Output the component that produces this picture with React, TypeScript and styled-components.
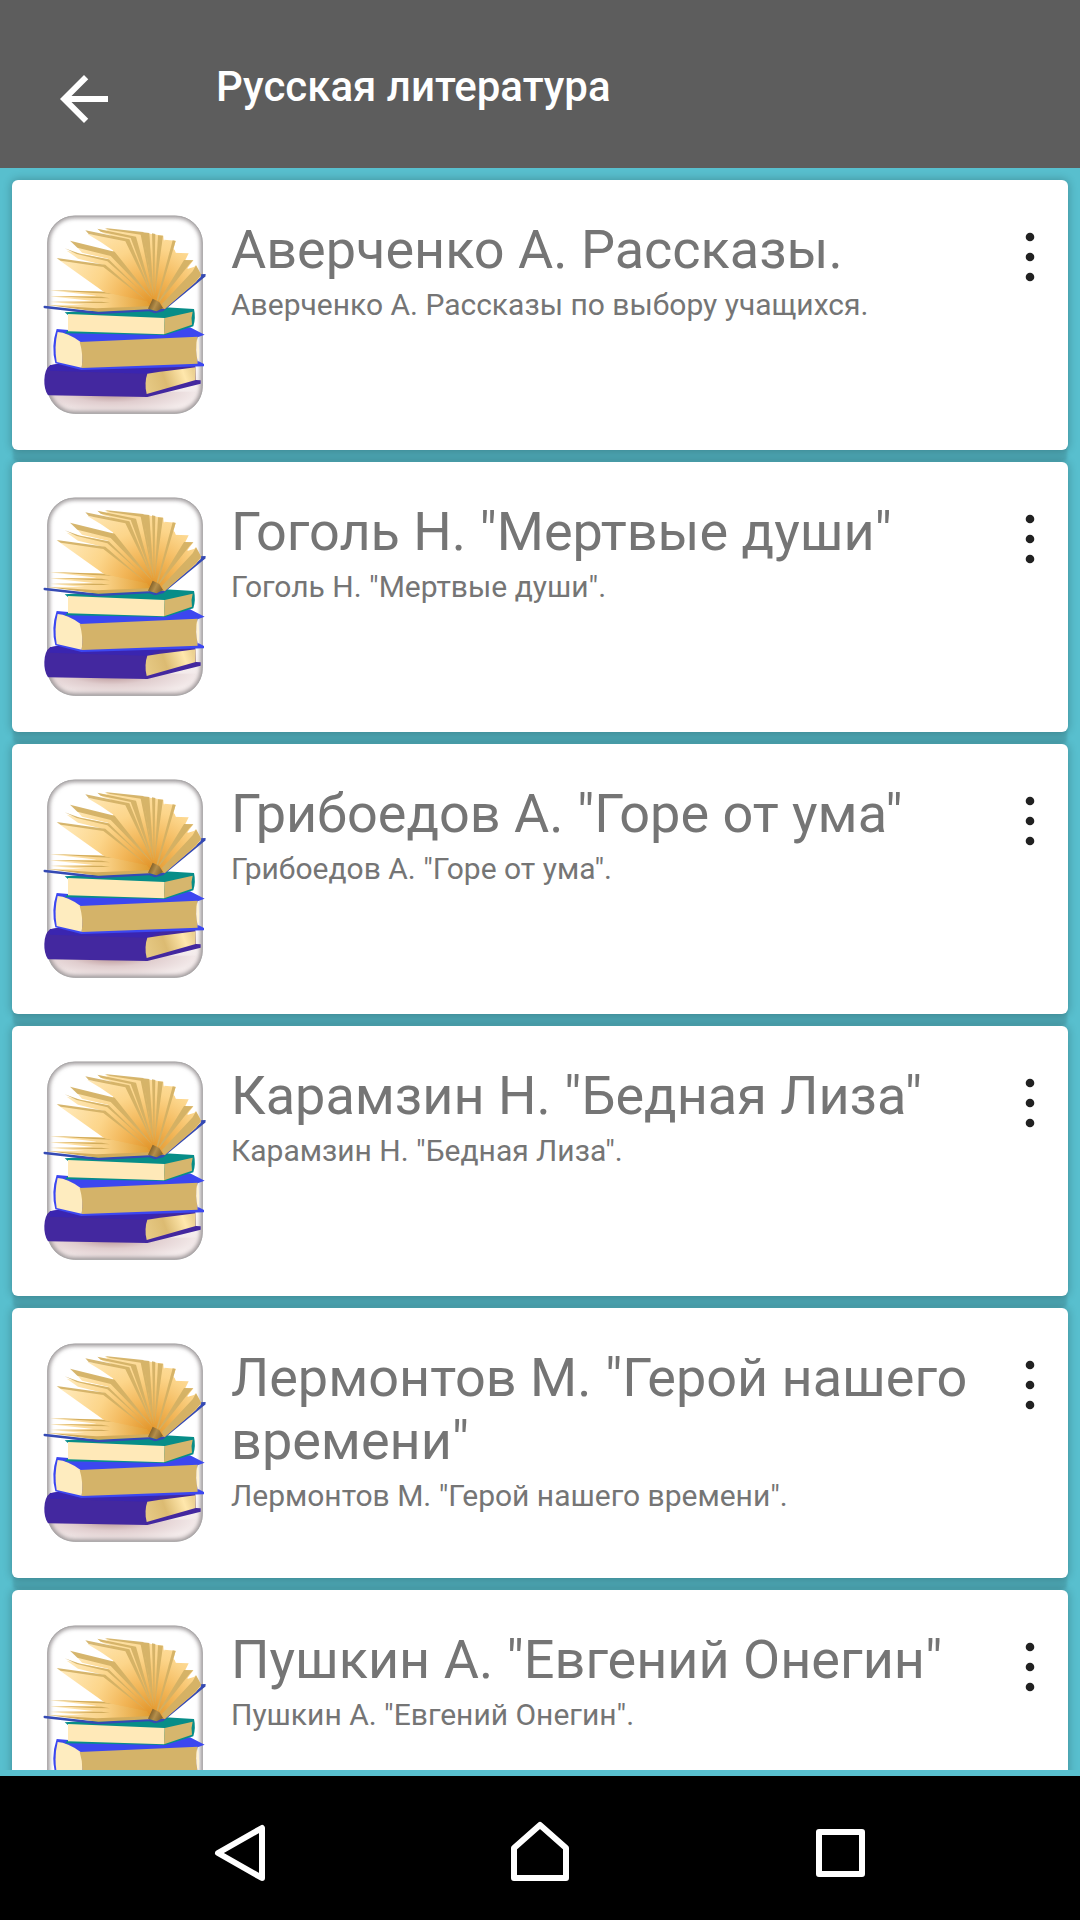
import React from "react";
import styled, { createGlobalStyle } from "styled-components";

const GlobalStyle = createGlobalStyle`
  *, *::before, *::after { box-sizing: border-box; }
  body {
    margin: 0;
    background: #000;
    font-family: Roboto, "Noto Sans", sans-serif;
  }
`;

const Screen = styled.div`
  display: flex;
  flex-direction: column;
  height: 100vh;
`;

const IconButton = styled.button`
  display: flex;
  align-items: center;
  justify-content: center;
  flex: none;
  padding: 0;
  border: 0;
  background: none;
  color: inherit;
  cursor: pointer;
`;

const AppBar = styled.header`
  display: flex;
  flex: none;
  align-items: flex-start;
  gap: 96px;
  padding: 63px 48px 33px;
  background: #5d5d5d;
  color: #fff;
`;

const AppTitle = styled.h1`
  margin: 0;
  font-size: 42px;
  line-height: 47px;
  font-weight: 500;
`;

const ListArea = styled.main`
  flex: 1;
  min-height: 0;
  padding-bottom: 6px;
  background: #58bfce;
`;

const BookList = styled.ul`
  display: flex;
  flex-direction: column;
  gap: 12px;
  height: 100%;
  margin: 0;
  padding: 12px;
  overflow-y: auto;
  scrollbar-width: none;
  list-style: none;
`;

const Card = styled.li`
  display: flex;
  flex: none;
  align-items: flex-start;
  padding: 30px 8px 30px 28px;
  border-radius: 6px;
  background: #fff;
  box-shadow:
    0 13px 3px -1px rgba(0, 0, 0, 0.12),
    0 0 8px 1px rgba(0, 0, 0, 0.22);
`;

const Picture = styled.svg`
  flex: none;
  width: 170px;
  height: 210px;
`;

const CardText = styled.div`
  flex: 1;
  min-width: 0;
  padding: 8px 0 0 21px;
  color: #757575;
`;

const BookTitle = styled.h2`
  margin: 0;
  font-size: 54px;
  line-height: 63px;
  font-weight: 400;
`;

const BookNote = styled.p`
  margin: 6px 0 0;
  font-size: 30px;
  line-height: 36px;
`;

const MenuButton = styled(IconButton)`
  width: 60px;
  height: 93px;
  color: #212121;
`;

const NavBar = styled.nav`
  display: flex;
  flex: none;
  padding: 36px 90px;
  background: #000;
  color: #fff;
`;

const NavButton = styled(IconButton)`
  flex: 1;
`;

const SharedDefs = styled.svg`
  position: absolute;
  width: 0;
  height: 0;
`;

const books = [
  { title: "Аверченко А. Рассказы.", note: "Аверченко А. Рассказы по выбору учащихся." },
  { title: 'Гоголь Н. "Мертвые души"', note: 'Гоголь Н. "Мертвые души".' },
  { title: 'Грибоедов А. "Горе от ума"', note: 'Грибоедов А. "Горе от ума".' },
  { title: 'Карамзин Н. "Бедная Лиза"', note: 'Карамзин Н. "Бедная Лиза".' },
  { title: 'Лермонтов М. "Герой нашего времени"', note: 'Лермонтов М. "Герой нашего времени".' },
  { title: 'Пушкин А. "Евгений Онегин"', note: 'Пушкин А. "Евгений Онегин".' },
];

function BookGradients() {
  return (
    <SharedDefs aria-hidden="true">
      <defs>
        <radialGradient id="page" gradientUnits="userSpaceOnUse" cx="360" cy="310" r="280">
          <stop offset="0" stopColor="#e2952a" />
          <stop offset="0.3" stopColor="#f2b658" />
          <stop offset="0.6" stopColor="#fcd58a" />
          <stop offset="1" stopColor="#ffe8b6" />
        </radialGradient>
        <linearGradient id="flat" gradientUnits="userSpaceOnUse" x1="56" x2="366" y1="0" y2="0">
          <stop offset="0" stopColor="#ffedc4" />
          <stop offset="0.55" stopColor="#f9d186" />
          <stop offset="1" stopColor="#e09a2c" />
        </linearGradient>
        <linearGradient id="edge" x1="0" x2="1" y1="0.6" y2="0.4">
          <stop offset="0" stopColor="#e6c984" />
          <stop offset="0.4" stopColor="#dcbb72" />
          <stop offset="0.8" stopColor="#ffe7ac" />
          <stop offset="1" stopColor="#ecd192" />
        </linearGradient>
        <linearGradient id="spine" x1="0" x2="1" y1="0.3" y2="0.7">
          <stop offset="0" stopColor="#6e4f1c" />
          <stop offset="0.5" stopColor="#b58e4a" />
          <stop offset="1" stopColor="#80602a" />
        </linearGradient>
        <radialGradient id="floor" gradientUnits="userSpaceOnUse" cx="0" cy="0" r="1" gradientTransform="translate(245 575) scale(260 66)">
          <stop offset="0" stopColor="#b28a8c" />
          <stop offset="0.5" stopColor="#e0cdce" />
          <stop offset="1" stopColor="#f3eaea" />
        </radialGradient>
        <linearGradient id="glow" x1="0" x2="0" y1="0" y2="1">
          <stop offset="0" stopColor="#f3eaea" stopOpacity="0" />
          <stop offset="1" stopColor="#f3eaea" />
        </linearGradient>
        <filter id="soft" x="-10%" y="-10%" width="120%" height="120%">
          <feGaussianBlur stdDeviation="7" />
        </filter>
        <clipPath id="frame">
          <rect x="52" y="47" width="466" height="594" rx="82" />
        </clipPath>
      </defs>
    </SharedDefs>
  );
}

function BooksPicture() {
  return (
    <Picture viewBox="30 30 510 630" aria-hidden="true">
      <g clipPath="url(#frame)">
        <rect x="52" y="47" width="466" height="594" fill="#fff" />
        <rect x="52" y="480" width="466" height="96" fill="url(#glow)" />
        <rect x="52" y="575" width="466" height="66" fill="url(#floor)" />
        <rect x="52" y="47" width="466" height="594" rx="82" fill="none" stroke="#8b8587" strokeWidth="12" filter="url(#soft)" />
      </g>
      <rect x="53" y="48" width="464" height="592" rx="81" fill="none" stroke="#aaa8a9" strokeWidth="3" />

      {/* bottom violet book */}
      <path d="M60 496 L104 488 L180 500 L360 500 L496 496 L498 540 L512 541 L512 551 L352 591 L54 586 Q42 568 43 540 Q44 508 60 496Z" fill="#43289f" />
      <path d="M60 496 L104 488 L180 500 L400 500 L352 521 L60 512Z" fill="#3a25b0" />
      <path d="M352 521 Q430 510 497 502 L497 540 L350 582 Q342 548 352 521Z" fill="url(#edge)" />

      {/* blue book */}
      <path d="M80 387 L115 390 L480 382 L524 404 L503 412 L503 482 L522 492 L522 499 L154 510 L76 490 Q62 440 80 387Z" fill="#3c47f0" />
      <path d="M83 396 Q112 397 152 426 Q162 464 155 503 L80 486 Q72 440 83 396Z" fill="#feecbf" />
      <path d="M149 426 L503 410 Q497 448 503 491 L155 504 Q161 464 149 426Z" fill="#d4b369" />
      <path d="M502 411 Q494 448 504 488 Q512 450 502 411Z" fill="#fff3d5" />

      {/* green book */}
      <path d="M104 337 L380 320 L492 327 Q498 353 490 379 L406 405 L105 400 L114 391 L114 345Z" fill="#078d88" />
      <path d="M114 342 L404 354 L402 403 L114 394Z" fill="#ffe9b8" />
      <path d="M404 354 L488 335 Q482 355 486 374 L402 403Z" fill="#d6b66d" />

      {/* open book cover */}
      <path d="M44 321 L205 339 L356 330 L374 336 L398 330 L522 228" fill="none" stroke="#354ab4" strokeWidth="7" strokeLinecap="round" strokeLinejoin="round" />
      <path d="M510 223 L527 222 L526 230 L514 234Z" fill="#354ab4" />

      {/* flat pages on the left */}
      <g fill="url(#flat)">
        <path d="M58 271 L200 274 L350 286 L380 300 L366 324 L300 312 L190 286Z" />
        <path d="M58 289 L190 287 L350 292 L362 318 L190 303Z" />
        <path d="M60 306 L190 303 L356 306 L360 326 L190 317Z" />
        <path d="M52 315 L190 314 L356 310 L360 324 L205 328Z" />
      </g>
      <g fill="#d2ac5c">
        <path d="M58 270 L220 275 L250 281 L190 279Z" />
        <path d="M58 288 L215 290 L240 295 L190 294Z" />
        <path d="M60 305 L215 305 L240 309 L190 309Z" />
        <path d="M52 315 L200 325 L356 319 L358 328 L205 335Z" />
      </g>

      {/* fanned pages */}
      <g fill="url(#page)">
        <path d="M222 276 L224 200 L240 168 L256 140 L290 116 L340 100 L400 120 L434 150 L450 190 L474 206 L494 200 L404 326 L366 324 L350 303Z" />
        <path d="M222 276 L82 176 L224 196 L366 300 L350 303Z" />
        <path d="M110 152 L232 178 L370 298 L358 298 L224 196 L144 176Z" />
        <path d="M128 126 L246 155 L372 296 L362 292 L240 178 L156 158Z" />
        <path d="M172 102 L290 116 L374 296 L366 290 L256 156 L212 126Z" />
        <path d="M204 88 L322 108 L374 294 L366 288 L290 118 L220 100Z" />
        <path d="M228 86 L340 98 L400 107 L402 130 L382 300 L366 296Z" />
        <path d="M403 119 L437 122 L388 304 L374 302Z" />
        <path d="M428 158 L476 160 L462 188 L396 305 L380 302Z" />
        <path d="M460 180 L490 181 L474 202 L398 308 L388 304Z" />
        <path d="M498 196 L514 225 L498 246 L404 326 L386 305Z" />
      </g>

      {/* page edges */}
      <g fill="#d2b064" opacity="0.9">
        <path d="M80 174 L226 194 L350 302 L220 201 L92 182Z" />
        <path d="M104 145 L150 161 L236 178 L340 280 L232 184 L140 162Z" />
        <path d="M120 122 L254 155 L368 298 L242 168 L142 143Z" />
        <path d="M166 91 L298 118 L368 292 L286 124 L176 102Z" />
        <path d="M202 86 L318 110 L368 290 L302 114 L212 95Z" />
        <path d="M224 84 L340 96 L368 280 L332 104 L240 90Z" />
        <path d="M338 97 L358 99 L371 292Z" />
        <path d="M366 100 L376 102 L372 290Z" />
        <path d="M384 106 L399 107 L374 290Z" />
        <path d="M428 121 L437 123 L384 302 L380 300Z" />
        <path d="M462 180 L490 181 L478 193 L390 304 L386 304Z" />
        <path d="M498 196 L514 225 L498 244 L404 328 L396 312 L488 214Z" />
      </g>
      <path d="M354 326 L368 296 L388 306 L399 324 L380 334Z" fill="url(#spine)" />
    </Picture>
  );
}

function MoreIcon() {
  return (
    <svg width="12" height="52" viewBox="0 0 12 52" fill="currentColor" aria-hidden="true">
      <circle cx="6" cy="6" r="4.3" />
      <circle cx="6" cy="26" r="4.3" />
      <circle cx="6" cy="46" r="4.3" />
    </svg>
  );
}

function NavIcon({ d }: { d: string }) {
  return (
    <svg width="72" height="72" viewBox="0 0 72 72" fill="none" stroke="currentColor" strokeWidth="6" strokeLinejoin="round" aria-hidden="true">
      <path d={d} />
    </svg>
  );
}

export default function App() {
  return (
    <Screen>
      <GlobalStyle />
      <BookGradients />
      <AppBar>
        <IconButton type="button" aria-label="Назад">
          <svg width="72" height="72" viewBox="0 0 24 24" fill="currentColor" aria-hidden="true">
            <path d="M20 11H7.83l5.59-5.59L12 4l-8 8 8 8 1.41-1.41L7.83 13H20v-2z" />
          </svg>
        </IconButton>
        <AppTitle>Русская литература</AppTitle>
      </AppBar>
      <ListArea>
        <BookList>
          {books.map((book) => (
            <Card key={book.title}>
              <BooksPicture />
              <CardText>
                <BookTitle>{book.title}</BookTitle>
                <BookNote>{book.note}</BookNote>
              </CardText>
              <MenuButton type="button" aria-label="Меню">
                <MoreIcon />
              </MenuButton>
            </Card>
          ))}
        </BookList>
      </ListArea>
      <NavBar>
        <NavButton type="button" aria-label="Назад">
          <NavIcon d="M58 16V66L14 41Z" />
        </NavButton>
        <NavButton type="button" aria-label="Домой">
          <NavIcon d="M36 13L10 36V66H62V36Z" />
        </NavButton>
        <NavButton type="button" aria-label="Недавние">
          <NavIcon d="M15 20H58V62H15Z" />
        </NavButton>
      </NavBar>
    </Screen>
  );
}
